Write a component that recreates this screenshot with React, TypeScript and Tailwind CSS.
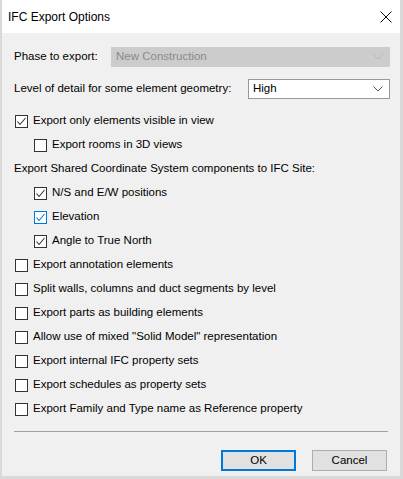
import React from 'react'

const font = { fontFamily: '"Segoe UI", "Liberation Sans", Arial, sans-serif' }

function Check({ checked, hot }: { checked?: boolean; hot?: boolean }) {
  const border = hot ? 'border-[#0078d7]' : 'border-[#333333]'
  return (
    <span className={`w-[13px] h-[13px] border ${border} bg-white flex items-center justify-center shrink-0`}>
      {checked && (
        <svg width="11" height="11" viewBox="0 0 11 11">
          <polyline
            points="1.5,5.5 4,8.5 9.5,2"
            fill="none"
            stroke={hot ? '#0078d7' : '#333333'}
            strokeWidth="1.1"
          />
        </svg>
      )}
    </span>
  )
}

function Row({ label, checked, hot, indent }: { label: string; checked?: boolean; hot?: boolean; indent?: boolean }) {
  return (
    <div className={`h-[24px] flex items-center gap-[5px] ${indent ? 'pl-[20px]' : 'pl-px'}`}>
      <Check checked={checked} hot={hot} />
      <span className="text-[11.5px] text-black whitespace-nowrap">{label}</span>
    </div>
  )
}

function Chevron({ color }: { color: string }) {
  return (
    <svg width="10" height="6" viewBox="0 0 10 6">
      <polyline points="0.5,0.5 5,5 9.5,0.5" fill="none" stroke={color} strokeWidth="1" />
    </svg>
  )
}

const bottomRows = [
  'Export annotation elements',
  'Split walls, columns and duct segments by level',
  'Export parts as building elements',
  'Allow use of mixed "Solid Model" representation',
  'Export internal IFC property sets',
  'Export schedules as property sets',
  'Export Family and Type name as Reference property',
]

export default function App() {
  return (
    <div
      className="w-[403px] h-[479px] bg-[#f0f0f0] border-l-2 border-r-[3px] border-b-[3px] border-[#d9d9d9] flex flex-col"
      style={font}
    >
      <div className="h-[33px] bg-white flex items-center justify-between pl-[6px] pr-[8px] shrink-0">
        <span className="text-[12px] text-black">IFC Export Options</span>
        <svg width="12" height="12" viewBox="0 0 12 12">
          <path d="M0.5,0.5 L11.5,11.5 M11.5,0.5 L0.5,11.5" stroke="#111" strokeWidth="1" />
        </svg>
      </div>

      <div className="flex flex-col pl-[12px] pr-[10px] pt-[14px]">
        <div className="flex items-center h-[20px]">
          <span className="text-[11.5px] text-black w-[97px]">Phase to export:</span>
          <div className="flex-1 h-[20px] bg-[#cccccc] flex items-center justify-between pl-[5px] pr-[7px]">
            <span className="text-[11.5px] text-[#8a8a8a]">New Construction</span>
            <Chevron color="#b8b8b8" />
          </div>
        </div>

        <div className="flex items-center h-[20px] mt-[12px]">
          <span className="text-[11.5px] text-black w-[234px]">Level of detail for some element geometry:</span>
          <div className="flex-1 h-[20px] bg-white border border-[#999999] flex items-center justify-between pl-[4px] pr-[6px]">
            <span className="text-[11.5px] text-black">High</span>
            <Chevron color="#555555" />
          </div>
        </div>

        <div className="flex flex-col mt-[10px]">
          <Row label="Export only elements visible in view" checked />
          <Row label="Export rooms in 3D views" indent />
          <div className="h-[24px] flex items-center">
            <span className="text-[11.5px] text-black whitespace-nowrap">Export Shared Coordinate System components to IFC Site:</span>
          </div>
          <Row label="N/S and E/W positions" checked indent />
          <Row label="Elevation" checked hot indent />
          <Row label="Angle to True North" checked indent />
          {bottomRows.map((r) => (
            <Row key={r} label={r} />
          ))}
        </div>

        <div className="h-px bg-[#a0a0a0] mt-[10px] mr-[2px]" />

        <div className="flex justify-end gap-[16px] mt-[18px] mr-[3px]">
          <button className="w-[75px] h-[21px] bg-[#e1e1e1] border-2 border-[#0078d7] text-[11.5px] text-black flex items-center justify-center">
            OK
          </button>
          <button className="w-[75px] h-[21px] bg-[#e1e1e1] border border-[#adadad] text-[11.5px] text-black flex items-center justify-center">
            Cancel
          </button>
        </div>
      </div>
    </div>
  )
}
